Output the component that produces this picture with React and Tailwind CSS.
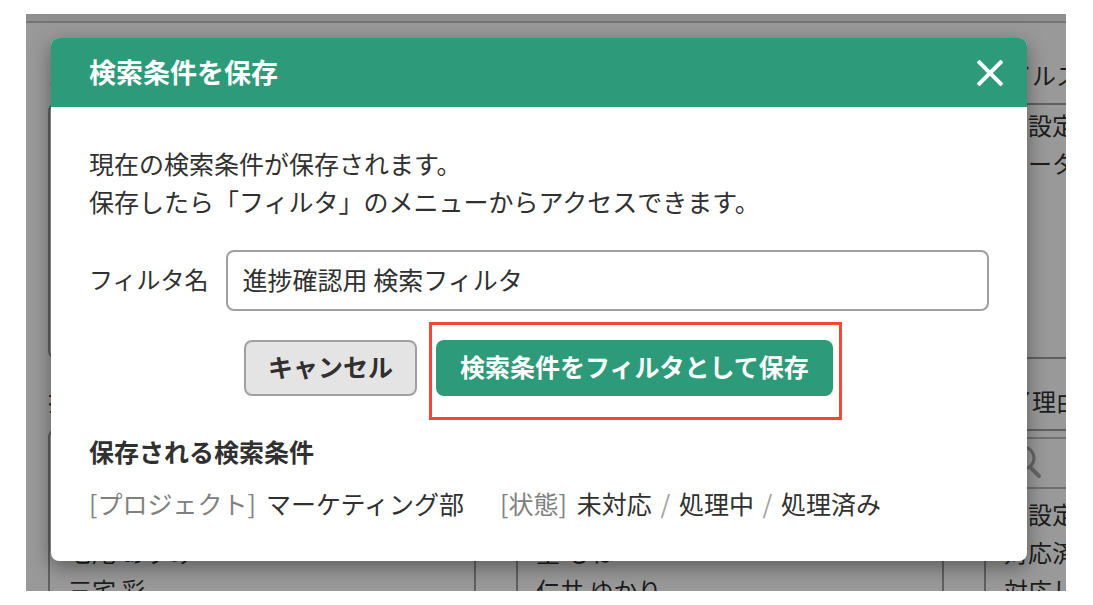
import React, { useState } from 'react'

const boards = [
  [
    { label: 'ステータス', items: ['未対応', '処理中', '処理済み'] },
    { label: '担当者', items: ['未設定', '七尾 あずみ', '三宅 彩'], search: true },
  ],
  [
    { label: 'カテゴリー', items: ['未設定'] },
    { label: '登録者', items: ['未設定', '星 もね', '仁井 ゆかり'], search: true },
  ],
  [
    { label: 'マイルストーン', items: ['未設定', 'ベータ版'] },
    { label: '完了理由', items: ['未設定', '対応済み', '対応しない'], search: true },
  ],
]

const SearchIcon = () => (
  <svg className="w-8 h-9 shrink-0" viewBox="0 0 32 36" fill="none" stroke="#666666" strokeWidth="3" strokeLinecap="round">
    <circle cx="13" cy="13" r="11" />
    <path d="M20 22 L29 31" strokeWidth="4" />
  </svg>
)

const FilterList = ({ label, items, search }) => (
  <section>
    <h3 className="h-[52px] leading-[48px]">{label}</h3>
    <div className="h-[256px] border-2 border-[#606060] rounded-lg overflow-hidden">
      {search && (
        <div className="h-[52px] mt-1.5 mx-1.5 pl-4 flex items-center border-2 border-[#707070]">
          <SearchIcon />
        </div>
      )}
      <ul className={search ? 'px-[18px] pt-1.5' : 'px-[18px] pt-px'}>
        {items.map((item, i) => (
          <li key={i} className="h-[38px] leading-[38px]">{item}</li>
        ))}
      </ul>
    </div>
  </section>
)

const Backdrop = () => (
  <div className="bg-[#999999] text-[#1c1c1c] text-2xl h-full" aria-hidden="true">
    <div className="h-[9px] bg-[#8f8f8f] border-b-2 border-[#747474]"></div>
    <div className="pl-[22px] pt-7 flex gap-10">
      {boards.map((column, i) => (
        <div key={i} className="w-[428px] shrink-0 grid gap-[18px]">
          {column.map((list) => (
            <FilterList key={list.label} {...list} />
          ))}
        </div>
      ))}
    </div>
  </div>
)

const Condition = ({ name, values }) => (
  <div className="flex gap-2.5">
    <dt className="text-[#808080]">[{name}]</dt>
    <dd>
      {values.map((value, i) => (
        <React.Fragment key={value}>
          {i > 0 && <span className="text-[#a0a0a0] mx-[3px]"> / </span>}
          {value}
        </React.Fragment>
      ))}
    </dd>
  </div>
)

const SaveFilterDialog = () => {
  const [name, setName] = useState('進捗確認用 検索フィルタ')

  return (
    <div role="dialog" aria-labelledby="dialog-title" className="bg-white rounded-lg overflow-hidden shadow-[0_6px_20px_rgba(0,0,0,0.4)]">
      {/* Header */}
      <div className="h-[69px] bg-[#2d9a7a] text-white pl-[38px] pr-6 flex items-center justify-between">
        <h2 id="dialog-title" className="text-[27px] font-bold">検索条件を保存</h2>
        <button aria-label="閉じる">
          <svg className="w-[26px] h-[26px]" viewBox="0 0 26 26" stroke="currentColor" strokeWidth="4">
            <path d="M1 1 L25 25 M25 1 L1 25" />
          </svg>
        </button>
      </div>

      {/* Body */}
      <div className="px-[38px] pt-[37px] pb-[39px]">
        <p className="leading-[38px]">
          現在の検索条件が保存されます。<br />
          保存したら「フィルタ」のメニューからアクセスできます。
        </p>

        <div className="mt-[30px] flex items-center gap-[17px]">
          <label htmlFor="filter-name" className="shrink-0 pb-1 text-2xl">フィルタ名</label>
          <input
            id="filter-name"
            type="text"
            value={name}
            onChange={(e) => setName(e.target.value)}
            className="flex-1 min-w-0 h-[61px] px-[15px] pb-1 border-2 border-[#a0a0a0] rounded-lg focus:outline-none"
          />
        </div>

        <div className="mt-[11px] pl-[155px] flex gap-3">
          <button className="w-[173px] h-14 mt-[18px] pb-0.5 bg-[#e4e4e4] border-2 border-[#a0a0a0] rounded-lg font-bold">
            キャンセル
          </button>
          <div className="w-[413px] h-[98px] pt-[15px] pl-1 pr-1.5 border-3 border-[#f9443a]">
            <button className="w-full h-14 pb-0.5 bg-[#2d9a7a] text-white rounded-lg font-bold whitespace-nowrap">
              検索条件をフィルタとして保存
            </button>
          </div>
        </div>

        <h3 className="mt-3 leading-[38px] font-bold">保存される検索条件</h3>
        <dl className="mt-3.5 flex gap-9 leading-[38px] whitespace-nowrap">
          <Condition name="プロジェクト" values={['マーケティング部']} />
          <Condition name="状態" values={['未対応', '処理中', '処理済み']} />
        </dl>
      </div>
    </div>
  )
}

const App = () => {
  return (
    <div className="h-screen bg-white py-[14px] pl-[26px] pr-[27px] font-['Noto_Sans_CJK_JP',sans-serif] text-[25px] text-[#303030]">
      <div className="relative h-full overflow-hidden">
        <Backdrop />
        <div className="absolute inset-0 pt-6 pl-[25px] pr-[39px]">
          <SaveFilterDialog />
        </div>
      </div>
    </div>
  )
}

export default App
